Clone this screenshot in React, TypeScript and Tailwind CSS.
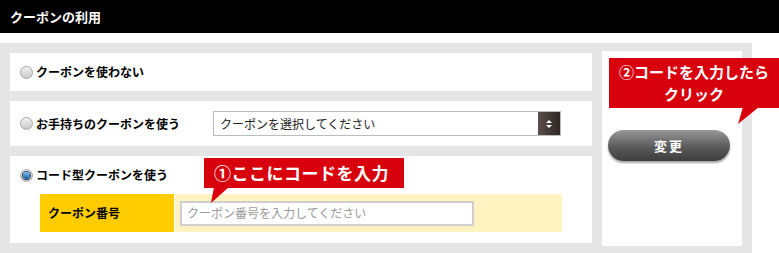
import React from 'react';

const font = { fontFamily: '"Noto Sans CJK JP", "Noto Sans", sans-serif' };

function Radio({ checked }: { checked?: boolean }) {
  return (
    <span className="relative inline-flex h-[13px] w-[13px] shrink-0 items-center justify-center rounded-full border border-[#a8a8a8] bg-gradient-to-b from-[#f2f2f2] to-[#c9c9c9]">
      {checked && (
        <span className="h-[7px] w-[7px] rounded-full bg-gradient-to-b from-[#7fc4f0] to-[#0a5aa0] ring-1 ring-[#1d3d60]" />
      )}
    </span>
  );
}

export default function App() {
  return (
    <div className="w-[779px] h-[253px] overflow-hidden bg-white" style={font}>
      {/* Header */}
      <div className="flex h-[33px] items-center bg-black px-[10px]">
        <span className="text-[13px] font-bold text-white">クーポンの利用</span>
      </div>

      <div className="relative mt-[10px] flex w-[752px] gap-[10px] bg-[#e5e5e5] px-[10px] pb-[10px] pt-[8px]">
        {/* left rows */}
        <div className="mt-[2px] flex w-[582px] flex-col gap-[10px]">
          <div className="flex h-[38px] items-center gap-[3px] bg-white px-[10px]">
            <Radio />
            <span className="text-[12px] font-bold text-black">クーポンを使わない</span>
          </div>

          <div className="flex h-[45px] items-center bg-white px-[10px]">
            <div className="flex w-[193px] items-center gap-[3px]">
              <Radio />
              <span className="text-[12px] font-bold text-black">お手持ちのクーポンを使う</span>
            </div>
            <div className="flex h-[25px] w-[348px] items-stretch border border-[#bcbcbc] bg-white">
              <span className="flex flex-1 items-center px-[6px] text-[12px] text-[#222]">
                クーポンを選択してください
              </span>
              <span className="flex w-[22px] flex-col items-center justify-center gap-[2px] bg-gradient-to-r from-[#5a4f4c] to-[#2e2826]">
                <span className="h-0 w-0 border-x-[3px] border-b-[3px] border-x-transparent border-b-white" />
                <span className="h-0 w-0 border-x-[3px] border-t-[3px] border-x-transparent border-t-white" />
              </span>
            </div>
          </div>

          <div className="relative h-[87px] bg-white pl-[10px] pr-[30px]">
            <div className="flex h-[38px] items-center gap-[3px]">
              <Radio checked />
              <span className="text-[12px] font-bold text-black">コード型クーポンを使う</span>
            </div>
            <div className="ml-[20px] flex h-[38px]">
              <div className="flex w-[134px] items-center bg-[#ffcc00] pl-[8px]">
                <span className="text-[12px] font-bold text-black">クーポン番号</span>
              </div>
              <div className="ml-[1px] flex flex-1 items-center bg-[#fff3c2] pl-[5px]">
                <div className="flex h-[25px] w-[294px] items-center border-2 border-[#cfcfcf] bg-white px-[5px] text-[12px] text-[#9a9a9a]">
                  クーポン番号を入力してください
                </div>
              </div>
            </div>

            {/* callout 1 */}
            <div className="absolute left-[194px] top-[2px] flex h-[30px] w-[200px] items-center bg-[#d9000d] pl-[10px]">
              <span className="text-[17px] font-bold leading-[20px] tracking-[0.5px] text-white">①ここにコードを入力</span>
              <svg className="absolute left-[6px] top-[29px]" width="20" height="17" viewBox="0 0 20 17">
                <polygon points="4,0 19,0 1,16" fill="#d9000d" />
              </svg>
            </div>
          </div>
        </div>

        {/* right panel */}
        <div className="flex h-[195px] w-[140px] flex-col bg-white pl-[6px] pt-[79px]">
          <div className="flex h-[31px] w-[122px] items-center justify-center rounded-full bg-gradient-to-b from-[#9a9a9a] via-[#5f5f5f] to-[#3d3d3d] shadow-[0_2px_2px_rgba(0,0,0,0.35)]">
            <span className="text-[13px] font-bold tracking-[2px] text-white">変更</span>
          </div>
        </div>

        {/* callout 2 */}
        <div className="absolute left-[609px] top-[15px] flex h-[50px] w-[170px] flex-col items-center justify-center bg-[#d9000d]">
          <span className="block text-[15px] font-bold leading-[22px] text-white">②コードを入力したら</span>
          <span className="block text-[15px] font-bold leading-[22px] text-white">クリック</span>
          <svg className="absolute left-[128px] top-[49px]" width="24" height="18" viewBox="0 0 24 18">
            <polygon points="6,0 22,0 1,17" fill="#d9000d" />
          </svg>
        </div>
      </div>
    </div>
  );
}
